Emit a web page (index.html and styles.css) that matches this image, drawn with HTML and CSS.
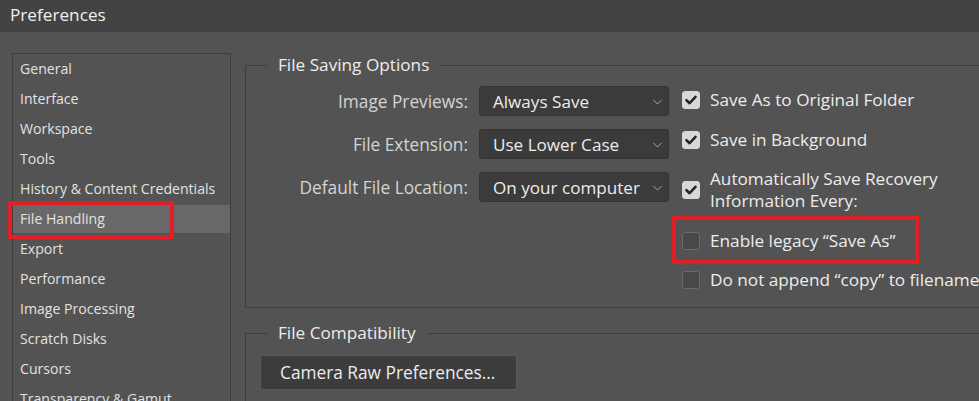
FILE: index.html
```html
<!DOCTYPE html>
<html lang="en">
<head>
<meta charset="utf-8">
<title>Preferences</title>
<link rel="stylesheet" href="styles.css">
</head>
<body>
<div class="window">
  <header class="titlebar">Preferences</header>
  <div class="main">
    <nav class="sidebar">
      <div class="nav-item">General</div>
      <div class="nav-item">Interface</div>
      <div class="nav-item">Workspace</div>
      <div class="nav-item">Tools</div>
      <div class="nav-item">History &amp; Content Credentials</div>
      <div class="nav-item selected">File Handling<span class="highlight hl-nav"></span></div>
      <div class="nav-item">Export</div>
      <div class="nav-item">Performance</div>
      <div class="nav-item">Image Processing</div>
      <div class="nav-item">Scratch Disks</div>
      <div class="nav-item">Cursors</div>
      <div class="nav-item">Transparency &amp; Gamut</div>
    </nav>
    <div class="content">
      <fieldset class="group group-saving">
        <legend>File Saving Options</legend>
        <div class="saving-body">
          <div class="form-grid">
            <label class="field-label">Image Previews:</label>
            <div class="select"><span>Always Save</span><svg class="chev" width="9" height="6" viewBox="0 0 9 6"><path d="M0.5 1 L4.5 5 L8.5 1" fill="none" stroke="#a8a8a8" stroke-width="1"/></svg></div>
            <label class="field-label">File Extension:</label>
            <div class="select"><span>Use Lower Case</span><svg class="chev" width="9" height="6" viewBox="0 0 9 6"><path d="M0.5 1 L4.5 5 L8.5 1" fill="none" stroke="#a8a8a8" stroke-width="1"/></svg></div>
            <label class="field-label">Default File Location:</label>
            <div class="select"><span>On your computer</span><svg class="chev" width="9" height="6" viewBox="0 0 9 6"><path d="M0.5 1 L4.5 5 L8.5 1" fill="none" stroke="#a8a8a8" stroke-width="1"/></svg></div>
          </div>
          <div class="checks">
            <div class="check-row"><span class="box checked"><svg width="18" height="18" viewBox="0 0 18 18"><path d="M4.5 9.2 L7.6 12.2 L13.5 5.8" fill="none" stroke="#262626" stroke-width="2.6" stroke-linecap="round" stroke-linejoin="round"/></svg></span><span class="check-text">Save As to Original Folder</span></div>
            <div class="check-row"><span class="box checked"><svg width="18" height="18" viewBox="0 0 18 18"><path d="M4.5 9.2 L7.6 12.2 L13.5 5.8" fill="none" stroke="#262626" stroke-width="2.6" stroke-linecap="round" stroke-linejoin="round"/></svg></span><span class="check-text">Save in Background</span></div>
            <div class="check-row"><span class="box checked"><svg width="18" height="18" viewBox="0 0 18 18"><path d="M4.5 9.2 L7.6 12.2 L13.5 5.8" fill="none" stroke="#262626" stroke-width="2.6" stroke-linecap="round" stroke-linejoin="round"/></svg></span><span class="check-text">Automatically Save Recovery<br>Information Every:</span></div>
            <div class="check-row"><span class="box"></span><span class="check-text">Enable legacy “Save As”</span><span class="highlight hl-check"></span></div>
            <div class="check-row"><span class="box"></span><span class="check-text nowrap">Do not append “copy” to filename</span></div>
          </div>
        </div>
      </fieldset>
      <fieldset class="group group-compat">
        <legend>File Compatibility</legend>
        <div class="compat-body">
          <button class="btn" type="button">Camera Raw Preferences...</button>
        </div>
      </fieldset>
    </div>
  </div>
</div>
</body>
</html>
```
FILE: styles.css
```css
* { box-sizing: border-box; }
html, body {
  margin: 0;
  padding: 0;
  width: 979px;
  height: 401px;
  overflow: hidden;
  background: #535353;
  font-family: "Open Sans", "Noto Sans", "DejaVu Sans", sans-serif;
  color: #e6e6e6;
}
.window {
  width: 979px;
  height: 401px;
  overflow: hidden;
}
.titlebar {
  height: 32px;
  background: #434343;
  padding-left: 10px;
  font-size: 17.2px;
  line-height: 29px;
  color: #f0f0f0;
}
.main {
  display: flex;
  align-items: flex-start;
}
.sidebar {
  flex: 0 0 219px;
  margin: 21px 0 0 12px;
  border: 1px solid #3e3e3e;
  border-bottom: none;
  height: 400px;
  display: flex;
  flex-direction: column;
  gap: 2px;
  padding-top: 1px;
}
.nav-item {
  position: relative;
  flex: none;
  height: 28px;
  padding-left: 7px;
  font-size: 14.1px;
  line-height: 28px;
  color: #e2e2e2;
  white-space: nowrap;
}
.nav-item.selected {
  background: #686868;
}
.highlight {
  position: absolute;
  border: 4px solid #e51d25;
  pointer-events: none;
}
.hl-nav {
  left: -5px;
  top: -4px;
  width: 166px;
  height: 38px;
}
.content {
  flex: 1 1 auto;
  margin-left: 14px;
  min-width: 760px;
}
.group {
  margin: 0;
  border: 1px solid #3e3e3e;
  border-right: none;
  padding: 0;
  width: 800px;
}
.group legend {
  margin-left: 21px;
  padding: 0 11px;
  font-size: 17.2px;
  line-height: 22px;
  color: #ececec;
}
.group-saving {
  margin-top: 22px;
  height: 254px;
}
.saving-body {
  display: flex;
  align-items: flex-start;
  padding-left: 52px;
}
.form-grid {
  display: grid;
  grid-template-columns: 170px 190px;
  column-gap: 11px;
  row-gap: 13px;
  align-items: center;
  margin-top: 10px;
}
.field-label {
  text-align: right;
  font-size: 17.3px;
  color: #d4d4d4;
  white-space: nowrap;
}
.select {
  height: 30px;
  background: #3b3b3b;
  border: 1px solid #333333;
  border-radius: 3px;
  display: flex;
  align-items: center;
  justify-content: space-between;
  padding: 0 6px 0 13px;
  font-size: 17.1px;
  color: #ececec;
  white-space: nowrap;
}
.chev { flex: none; margin-top: 1px; }
.checks {
  display: flex;
  flex-direction: column;
  gap: 17.5px;
  margin-left: 13px;
  margin-top: 13px;
}
.check-row {
  position: relative;
  display: flex;
  align-items: center;
  gap: 10px;
  min-height: 22px;
}
.box {
  flex: none;
  width: 18px;
  height: 18px;
  border-radius: 3px;
  background: #484848;
  border: 1px solid #6a6a6a;
  display: flex;
}
.box.checked {
  background: #d8d8d8;
  border-color: #d8d8d8;
}
.box svg { margin: -1px; }
.check-text {
  font-size: 17.2px;
  line-height: 22px;
  color: #ececec;
}
.nowrap { white-space: nowrap; }
.hl-check {
  left: -10px;
  top: -14px;
  width: 247px;
  height: 48px;
}
.group-compat {
  margin-top: 14px;
}
.compat-body {
  padding: 11px 0 20px 14px;
}
.btn {
  display: block;
  width: 257px;
  height: 35px;
  background: #3c3c3c;
  border: 1px solid #5a5a5a;
  border-radius: 3px;
  padding: 0 0 0 19px;
  text-align: left;
  font-family: inherit;
  font-size: 17.3px;
  color: #ececec;
}
```
